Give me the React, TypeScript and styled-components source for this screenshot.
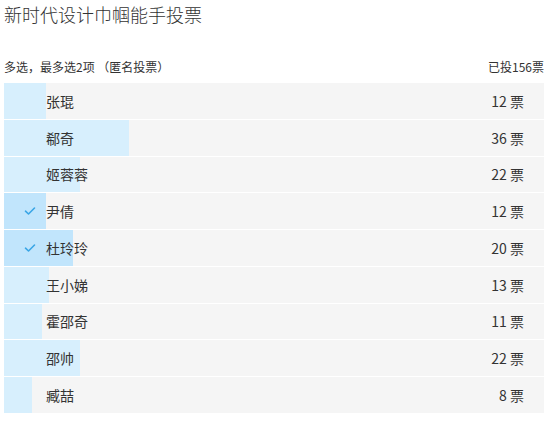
import React from "react";
import styled, { createGlobalStyle } from "styled-components";

const GlobalStyle = createGlobalStyle`
  html, body { margin: 0; padding: 0; background: #fff; }
  body { font-family: "Noto Sans CJK SC", "Noto Sans", sans-serif; color: #333; }
`;

const Page = styled.div`
  width: 540px;
  padding: 0 0 0 4px;
`;

const Title = styled.h1`
  margin: 0;
  padding-top: 2px;
  font-size: 18px;
  line-height: 24px;
  font-weight: 300;
  color: #333;
`;

const Meta = styled.div`
  display: flex;
  justify-content: space-between;
  align-items: center;
  margin-top: 30px;
  height: 20px;
  font-size: 12px;
  color: #333;
`;

const List = styled.div`
  display: flex;
  flex-direction: column;
  gap: 1px;
  margin-top: 7px;
`;

const Row = styled.div`
  position: relative;
  height: 35.75px;
  background: #f5f5f5;
  display: flex;
  align-items: center;
  font-size: 14px;
  color: #333;
`;

const Bar = styled.div<{ $selected: boolean }>`
  position: absolute;
  left: 0;
  top: 0;
  bottom: 0;
  background: ${(p) => (p.$selected ? "#c1e5fc" : "#d7effd")};
`;

const Check = styled.span`
  position: relative;
  width: 42px;
  display: flex;
  justify-content: center;
  padding-left: 10px;
  box-sizing: border-box;
  color: #3aa6e6;
`;

const Name = styled.span`
  position: relative;
  flex: 1;
`;

const Count = styled.span`
  position: relative;
  padding-right: 20px;
`;

const data = [
  { name: "张琨", votes: 12 },
  { name: "郗奇", votes: 36 },
  { name: "姬蓉蓉", votes: 22 },
  { name: "尹倩", votes: 12, selected: true },
  { name: "杜玲玲", votes: 20, selected: true },
  { name: "王小娣", votes: 13 },
  { name: "霍邵奇", votes: 11 },
  { name: "邵帅", votes: 22 },
  { name: "臧喆", votes: 8 },
];

const total = 156;

const CheckIcon = () => (
  <svg width="12" height="10" viewBox="0 0 12 10">
    <path d="M1.5 5.2 L4.5 8 L10.5 2" fill="none" stroke="currentColor" strokeWidth="1.6" strokeLinecap="round" strokeLinejoin="round" />
  </svg>
);

export default function App() {
  return (
    <>
      <GlobalStyle />
      <Page>
        <Title>新时代设计巾帼能手投票</Title>
        <Meta>
          <span>多选，最多选2项 （匿名投票）</span>
          <span>已投156票</span>
        </Meta>
        <List>
          {data.map((d) => (
            <Row key={d.name}>
              <Bar $selected={!!d.selected} style={{ width: `${(d.votes / total) * 100}%` }} />
              <Check>{d.selected ? <CheckIcon /> : null}</Check>
              <Name>{d.name}</Name>
              <Count>{d.votes} 票</Count>
            </Row>
          ))}
        </List>
      </Page>
    </>
  );
}
